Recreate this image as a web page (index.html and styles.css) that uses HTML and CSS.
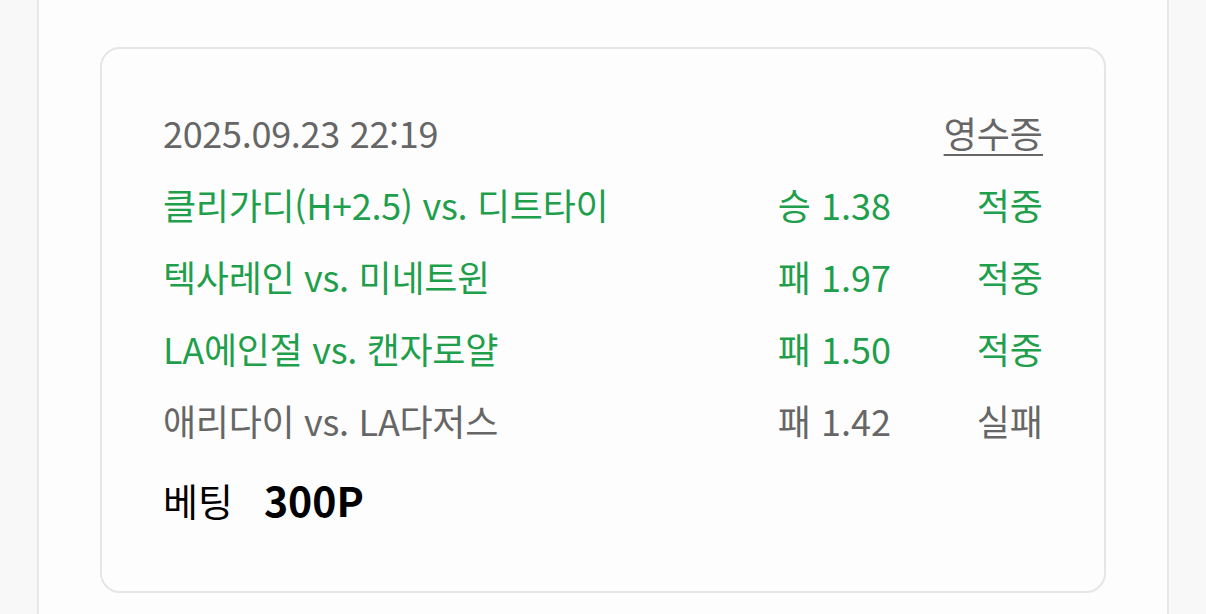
FILE: index.html
```html
<!DOCTYPE html>
<html lang="ko">
<head>
<meta charset="utf-8">
<link rel="stylesheet" href="styles.css">
</head>
<body>
<div class="page">
  <div class="card">
    <div class="row head">
      <span class="date">2025.09.23 22:19</span>
      <a class="receipt">영수증</a>
    </div>
    <div class="row win">
      <span class="match">클리가디(H+2.5) vs. 디트타이</span>
      <span class="odds">승 1.38</span>
      <span class="result">적중</span>
    </div>
    <div class="row win">
      <span class="match">텍사레인 vs. 미네트윈</span>
      <span class="odds">패 1.97</span>
      <span class="result">적중</span>
    </div>
    <div class="row win">
      <span class="match">LA에인절 vs. 캔자로얄</span>
      <span class="odds">패 1.50</span>
      <span class="result">적중</span>
    </div>
    <div class="row lose">
      <span class="match">애리다이 vs. LA다저스</span>
      <span class="odds">패 1.42</span>
      <span class="result">실패</span>
    </div>
    <div class="bet">
      <span class="bet-label">베팅</span>
      <span class="bet-amount">300P</span>
    </div>
  </div>
</div>
</body>
</html>
```

FILE: styles.css
```css
html, body {
  margin: 0;
  padding: 0;
  background: #f8f8f8;
  font-family: "Noto Sans CJK KR", "Noto Sans", sans-serif;
}
.page {
  box-sizing: border-box;
  width: 1132px;
  height: 614px;
  margin: 0 auto;
  background: #fdfdfd;
  border-left: 2px solid #e8e8e8;
  border-right: 2px solid #e8e8e8;
  padding: 47px 61px 0;
  overflow: hidden;
}
.card {
  box-sizing: border-box;
  height: 546px;
  border: 2px solid #e6e6e6;
  border-radius: 20px;
  background: #fdfdfd;
  padding: 47px 61px 0;
}
.row {
  display: flex;
  align-items: center;
  height: 72px;
  font-size: 36px;
  color: #666666;
}
.head { justify-content: space-between; }
.date { letter-spacing: -0.3px; }
.receipt {
  color: #666666;
  text-decoration: underline;
  text-decoration-thickness: 2px;
  text-underline-offset: 6px;
}
.match { flex: 1; letter-spacing: -0.3px; }
.odds { text-align: right; }
.result { width: 152px; text-align: right; }
.win { color: #1f9f4c; }
.lose { color: #666666; }
.bet {
  display: flex;
  align-items: center;
  gap: 31px;
  height: 72px;
  margin-top: 7px;
  color: #000;
}
.bet-label { font-size: 38px; }
.bet-amount { font-size: 41px; font-weight: 700; }
```
